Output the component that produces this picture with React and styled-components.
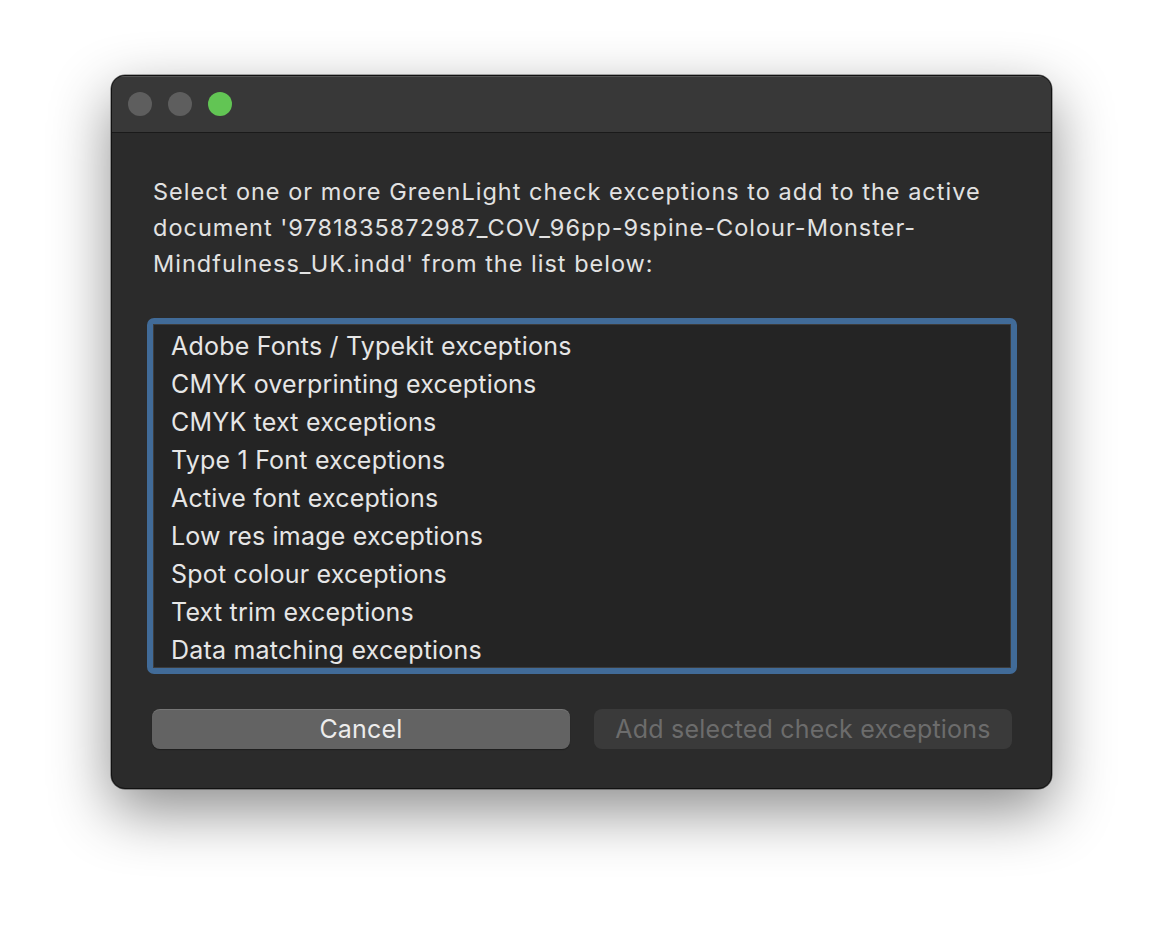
import React from "react";
import styled, { createGlobalStyle } from "styled-components";

const GlobalStyle = createGlobalStyle`
  html, body {
    margin: 0;
    padding: 0;
    background: #ffffff;
  }
  body {
    font-family: Inter, "Noto Sans", "Liberation Sans", sans-serif;
    -webkit-font-smoothing: antialiased;
  }
`;

const exceptions = [
  "Adobe Fonts / Typekit exceptions",
  "CMYK overprinting exceptions",
  "CMYK text exceptions",
  "Type 1 Font exceptions",
  "Active font exceptions",
  "Low res image exceptions",
  "Spot colour exceptions",
  "Text trim exceptions",
  "Data matching exceptions",
];

const descriptionLines = [
  "Select one or more GreenLight check exceptions to add to the active",
  "document '9781835872987_COV_96pp-9spine-Colour-Monster-",
  "Mindfulness_UK.indd' from the list below:",
];

function App() {
  return (
    <Page>
      <GlobalStyle />
      <Window>
        <TitleBar>
          <Light />
          <Light />
          <Light $color="#62c554" />
        </TitleBar>
        <Body>
          <Description>
            {descriptionLines.map((line) => (
              <span key={line}>{line}</span>
            ))}
          </Description>
          <ListFrame>
            <List>
              {exceptions.map((item) => (
                <Item key={item}>{item}</Item>
              ))}
            </List>
          </ListFrame>
          <Buttons>
            <Button>Cancel</Button>
            <Button $disabled>Add selected check exceptions</Button>
          </Buttons>
        </Body>
      </Window>
    </Page>
  );
}

export default App;

const Page = styled.div`
  width: 1164px;
  height: 938px;
  box-sizing: border-box;
  padding: 75px 0 0 111px;
`;

const Window = styled.div`
  width: 941px;
  height: 714px;
  box-sizing: border-box;
  display: flex;
  flex-direction: column;
  background: #2b2b2b;
  border: 1px solid #111111;
  border-radius: 14px;
  overflow: hidden;
  box-shadow: 0 22px 60px rgba(0, 0, 0, 0.45), 0 0 0 0.5px rgba(0, 0, 0, 0.6);
`;

const TitleBar = styled.div`
  height: 56px;
  flex-shrink: 0;
  display: flex;
  align-items: center;
  gap: 16px;
  padding-left: 16px;
  background: #383838;
  border-bottom: 1px solid #1a1a1a;
  box-shadow: inset 0 1px 0 rgba(255, 255, 255, 0.14);
`;

const Light = styled.span`
  width: 24px;
  height: 24px;
  border-radius: 50%;
  background: ${(p) => p.$color || "#5e5e5e"};
`;

const Body = styled.div`
  flex: 1;
  display: flex;
  flex-direction: column;
  padding: 41px 34px 0 35px;
`;

const Description = styled.p`
  margin: 0 0 36px 6px;
  display: flex;
  flex-direction: column;
  font-size: 23.5px;
  letter-spacing: 1px;
  line-height: 36px;
  color: #e2e2e2;

  span {
    white-space: nowrap;
  }
`;

const ListFrame = styled.div`
  height: 356px;
  box-sizing: border-box;
  border: 6px solid #416b98;
  border-radius: 7px;
  background: #242424;
`;

const List = styled.ul`
  list-style: none;
  margin: 0;
  height: 100%;
  box-sizing: border-box;
  padding: 2px 0 0 17px;
  border: 1px solid #3c3c3c;
`;

const Item = styled.li`
  height: 38px;
  display: flex;
  align-items: center;
  font-size: 25px;
  letter-spacing: 0.2px;
  color: #e6e6e6;
  white-space: nowrap;
`;

const Buttons = styled.div`
  display: grid;
  grid-template-columns: 418px 418px;
  gap: 24px;
  margin: 35px 0 0 5px;
`;

const Button = styled.button`
  height: 40px;
  border: none;
  border-radius: 8px;
  font-family: inherit;
  font-size: 25px;
  letter-spacing: 0.2px;
  background: ${(p) => (p.$disabled ? "#3a3a3a" : "#636363")};
  color: ${(p) => (p.$disabled ? "#6c6c6c" : "#ececec")};
  box-shadow: ${(p) =>
    p.$disabled ? "none" : "inset 0 1px 0 rgba(255, 255, 255, 0.12), 0 1px 1px rgba(0, 0, 0, 0.3)"};
`;
